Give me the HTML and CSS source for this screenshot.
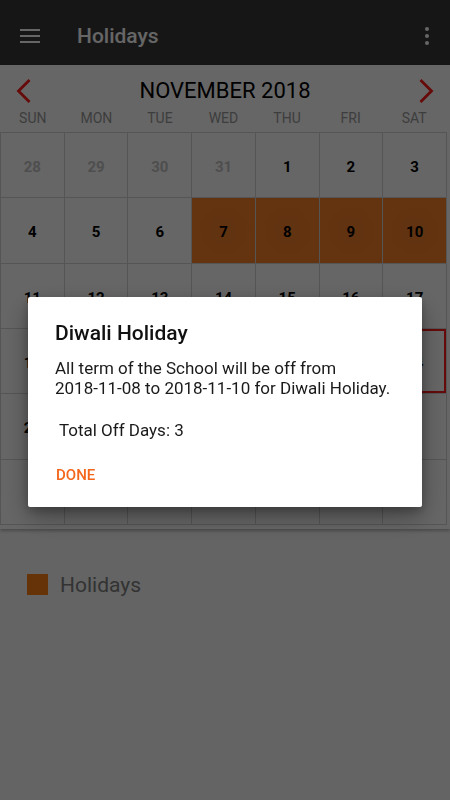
FILE: index.html
```html
<!DOCTYPE html>
<html lang="en">
<head>
<meta charset="utf-8">
<title>Holidays</title>
<link rel="stylesheet" href="styles.css">
</head>
<body>
<div class="app">
  <header class="appbar">
    <svg class="icon-menu" width="20" height="14" viewBox="0 0 20 14"><rect x="0" y="0" width="20" height="2" fill="#fff"/><rect x="0" y="6" width="20" height="2" fill="#fff"/><rect x="0" y="12" width="20" height="2" fill="#fff"/></svg>
    <h1 class="appbar-title">Holidays</h1>
    <svg class="icon-more" width="4" height="18" viewBox="0 0 4 18"><circle cx="2" cy="2" r="2" fill="#fff"/><circle cx="2" cy="9" r="2" fill="#fff"/><circle cx="2" cy="16" r="2" fill="#fff"/></svg>
  </header>

  <section class="calendar">
    <div class="month-nav">
      <svg class="nav-arrow" width="16" height="26" viewBox="0 0 16 26"><path d="M14.5 2 L3.5 13 L14.5 24" fill="none" stroke="#ff1a1a" stroke-width="2.8"/></svg>
      <h2 class="month-title">NOVEMBER 2018</h2>
      <svg class="nav-arrow" width="16" height="26" viewBox="0 0 16 26"><path d="M1.5 2 L12.5 13 L1.5 24" fill="none" stroke="#ff1a1a" stroke-width="2.8"/></svg>
    </div>
    <div class="weekdays">
      <span>SUN</span><span>MON</span><span>TUE</span><span>WED</span><span>THU</span><span>FRI</span><span>SAT</span>
    </div>
    <div class="grid">
      <div class="cell muted">28</div><div class="cell muted">29</div><div class="cell muted">30</div><div class="cell muted">31</div><div class="cell">1</div><div class="cell">2</div><div class="cell">3</div>
      <div class="cell">4</div><div class="cell">5</div><div class="cell">6</div><div class="cell holiday">7</div><div class="cell holiday">8</div><div class="cell holiday">9</div><div class="cell holiday">10</div>
      <div class="cell">11</div><div class="cell">12</div><div class="cell">13</div><div class="cell">14</div><div class="cell">15</div><div class="cell">16</div><div class="cell">17</div>
      <div class="cell">18</div><div class="cell">19</div><div class="cell">20</div><div class="cell">21</div><div class="cell">22</div><div class="cell">23</div><div class="cell today">24</div>
      <div class="cell">25</div><div class="cell">26</div><div class="cell">27</div><div class="cell">28</div><div class="cell">29</div><div class="cell">30</div><div class="cell muted">1</div>
      <div class="cell muted">2</div><div class="cell muted">3</div><div class="cell muted">4</div><div class="cell muted">5</div><div class="cell muted">6</div><div class="cell muted">7</div><div class="cell muted">8</div>
    </div>
  </section>

  <div class="legend">
    <span class="swatch"></span>
    <span class="legend-label">Holidays</span>
  </div>
</div>

<div class="scrim">
  <div class="dialog">
    <h3 class="dialog-title">Diwali Holiday</h3>
    <p class="dialog-text">All term of the School will be off from <span class="nowrap">2018-11-08</span> to <span class="nowrap">2018-11-10</span> for Diwali Holiday.</p>
    <p class="dialog-total"> Total Off Days: 3</p>
    <div class="dialog-actions"><span class="btn-done">DONE</span></div>
  </div>
</div>
</body>
</html>
```

FILE: styles.css
```css
* { box-sizing: border-box; }

html, body {
  margin: 0;
  padding: 0;
}

body {
  width: 450px;
  height: 800px;
  overflow: hidden;
  background: #fafafa;
  font-family: Roboto, "Noto Sans", sans-serif;
}

.app {
  height: 800px;
}

/* App bar */
.appbar {
  height: 65px;
  background: #383838;
  display: flex;
  align-items: center;
  padding: 6px 21px 0 20px;
  color: #fff;
}

.icon-menu { flex: none; }
.icon-more { flex: none; }

.appbar-title {
  flex: 1;
  margin: 0 0 0 37px;
  font-size: 21px;
  font-weight: 500;
  line-height: 24px;
}

/* Calendar card */
.calendar {
  background: #fff;
  padding-bottom: 4px;
  box-shadow: 0 2px 3px rgba(0, 0, 0, 0.25);
}

.month-nav {
  display: flex;
  align-items: center;
  justify-content: space-between;
  padding: 12px 15px 0 15px;
}

.nav-arrow { flex: none; }

.month-title {
  margin: 0;
  font-size: 22px;
  font-weight: 400;
  line-height: 28px;
  color: #000;
}

.weekdays {
  display: grid;
  grid-template-columns: repeat(7, 1fr);
  width: 447px;
  padding: 0 1px;
  margin-top: 5px;
  font-size: 14px;
  line-height: 16px;
  color: #9a9a9a;
  text-align: center;
}

.grid {
  display: grid;
  grid-template-columns: repeat(7, 1fr);
  grid-auto-rows: 64.33px;
  gap: 1px;
  padding: 1px;
  width: 447px;
  margin-top: 6px;
  background: #d5d5d5;
}

.cell {
  background: #fff;
  display: flex;
  align-items: center;
  justify-content: center;
  padding-top: 4px;
  font-size: 15px;
  font-weight: 700;
  color: #000;
}

.cell.muted { color: #c4c4c4; }

.cell.holiday {
  background: radial-gradient(circle at 50% 50%, #f47f2c 0%, #fa8228 70%);
}

.cell.today {
  box-shadow: inset 0 0 0 2px #ff1a1a;
}

/* Legend */
.legend {
  display: flex;
  align-items: center;
  height: 24px;
  margin: 44px 0 0 27px;
}

.swatch {
  width: 21px;
  height: 21px;
  background: #ff8016;
  flex: none;
}

.legend-label {
  margin-left: 12px;
  font-size: 21px;
  line-height: 24px;
  color: #808080;
}

/* Dialog */
.scrim {
  position: fixed;
  inset: 0;
  background: rgba(0, 0, 0, 0.6);
  display: flex;
  align-items: center;
  justify-content: center;
  padding-top: 4px;
}

.dialog {
  width: 394px;
  background: #fff;
  border-radius: 2px;
  padding: 24px 27px 22px 27px;
  box-shadow: 0 10px 24px rgba(0, 0, 0, 0.35), 0 4px 8px rgba(0, 0, 0, 0.2);
}

.dialog-title {
  margin: 0;
  font-size: 21px;
  font-weight: 500;
  line-height: 24px;
  color: #111;
}

.dialog-text {
  margin: 13px 0 0 0;
  font-size: 17px;
  line-height: 20px;
  color: #1a1a1a;
}

.nowrap { white-space: nowrap; }

.dialog-total {
  margin: 22px 0 0 0;
  font-size: 17px;
  line-height: 20px;
  color: #1a1a1a;
  white-space: pre;
}

.dialog-actions {
  margin-top: 25px;
  padding-left: 1px;
}

.btn-done {
  display: inline-block;
  font-size: 15px;
  font-weight: 500;
  line-height: 20px;
  color: #f4661b;
}
```
